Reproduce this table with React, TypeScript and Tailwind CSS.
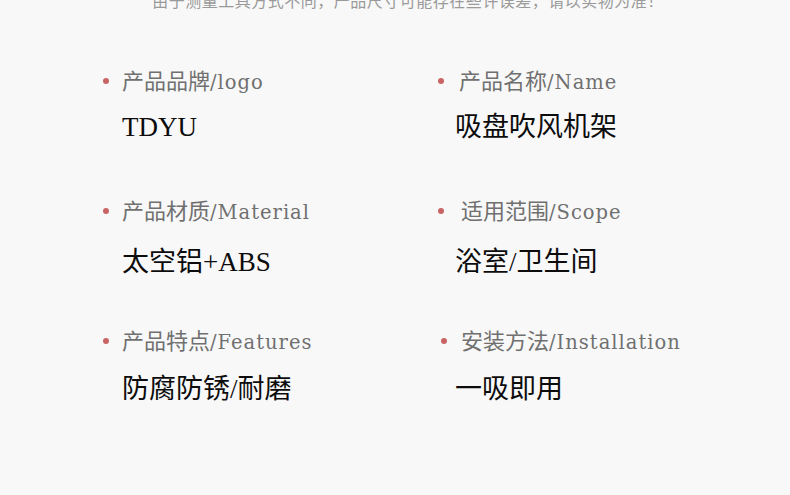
import React from "react";

const items = [
  { label: "产品品牌", en: "/logo", value: "TDYU", ml: "ml-[13px]", vl: "pl-[19px] mt-[14px]", row: "" },
  { label: "产品名称", en: "/Name", value: "吸盘吹风机架", ml: "ml-[15px]", vl: "pl-[17px] mt-[14px]", row: "" },
  { label: "产品材质", en: "/Material", value: "太空铝+ABS", ml: "ml-[13px]", vl: "pl-[19px] mt-[19px]", row: "mt-[52px]" },
  { label: "适用范围", en: "/Scope", value: "浴室/卫生间", ml: "ml-[17px]", vl: "pl-[17px] mt-[19px]", row: "mt-[52px]" },
  { label: "产品特点", en: "/Features", value: "防腐防锈/耐磨", ml: "ml-[13px]", vl: "pl-[19px] mt-[16px]", row: "mt-[47px]" },
  { label: "安装方法", en: "/Installation", value: "一吸即用", ml: "ml-[14px]", vl: "pl-[14px] mt-[16px]", row: "mt-[47px] pl-[3px]" },
];

type P = { label: string; en: string; value: string; ml: string; vl: string; row: string };

function Item({ label, en, value, ml, vl, row }: P) {
  return (
    <div className={`flex flex-col ${row}`}>
      <div className="flex items-center h-[30px]">
        <span className="w-[6px] h-[6px] rounded-full bg-[#c86464]" />
        <span className={`${ml} text-[22px] leading-[30px] text-[#707070]`}>
          <span style={{ fontFamily: '"Noto Sans CJK SC", sans-serif' }}>{label}</span>
          <span className="text-[19.5px] tracking-[1px]" style={{ fontFamily: '"DejaVu Serif", serif' }}>{en}</span>
        </span>
      </div>
      <div
        className={`${vl} text-[27px] leading-[34px] text-[#0c0c0c]`}
        style={{ fontFamily: '"Liberation Serif", "Noto Sans CJK SC", serif' }}
      >
        {value}
      </div>
    </div>
  );
}

export default function App() {
  return (
    <div className="w-[790px] h-[495px] bg-[#f8f8f8] overflow-hidden">
      <div
        className="-mt-[11px] h-[22px] pl-[26px] text-center text-[16px] leading-[22px] text-[#9a9a9a] tracking-[0.5px]"
        style={{ fontFamily: '"Noto Sans CJK SC", sans-serif' }}
      >
        由于测量工具方式不同，产品尺寸可能存在些许误差，请以实物为准！
      </div>
      <div className="pl-[103px] pt-[55px] grid grid-cols-[335px_1fr]">
        {items.map((it, i) => (
          <Item key={i} {...it} />
        ))}
      </div>
    </div>
  );
}
